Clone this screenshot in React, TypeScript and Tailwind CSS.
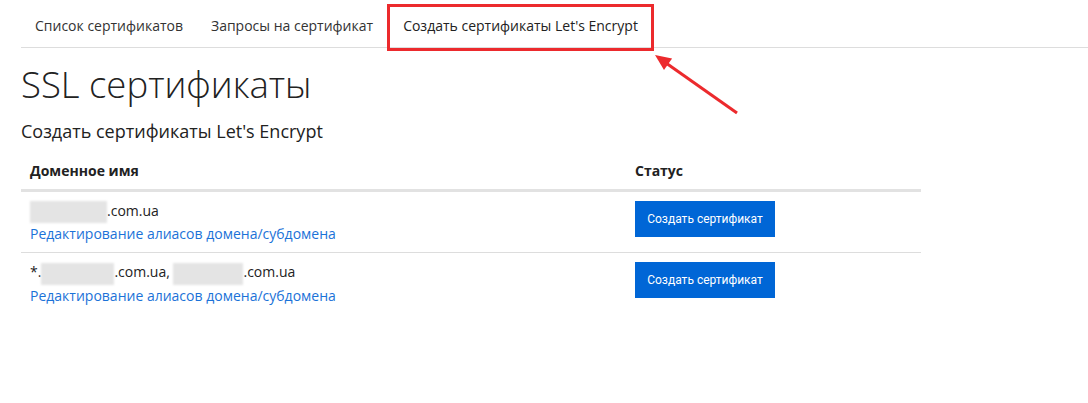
const rows = [
  { parts: ["blur:77", ".com.ua"], btn: "Создать сертификат" },
  { parts: ["*.", "blur:73", ".com.ua, ", "blur:70", ".com.ua"], btn: "Создать сертификат" },
];

const Blur = ({ w }: { w: number }) => (
  <span
    className="inline-block h-[22px] align-middle bg-[#e4e4e4] blur-[1px]"
    style={{ width: w }}
  />
);

const App = () => {
  return (
    <div className="relative min-h-screen bg-white pl-[21px] text-[#333] font-['Open_Sans',sans-serif]">
      {/* Tabs */}
      <ul className="flex border-b border-[#dddddd] text-[14px] leading-[20px]">
        <li className="px-[14px] pt-[16px] pb-[11px]">Список сертификатов</li>
        <li className="px-[14px] pt-[16px] pb-[11px]">Запросы на сертификат</li>
        <li className="relative px-[16px] pt-[16px] pb-[11px] text-[#222]">
          Создать сертификаты Let's Encrypt
          <span className="absolute left-0 right-0 top-[4px] -bottom-[4px] border-[3px] border-[#ec2a2d]" />
        </li>
      </ul>

      <h1 className="mt-[14px] text-[36.5px] leading-[44px] font-light text-[#222]">SSL сертификаты</h1>
      <h2 className="mt-[13px] text-[18px] leading-[24px] text-[#222]">Создать сертификаты Let's Encrypt</h2>

      {/* Table */}
      <table className="mt-[10px] w-[900px] border-collapse text-[14px]">
        <thead>
          <tr className="border-b-[3px] border-[#e2e2e2]">
            <th className="w-[605px] px-[9px] pt-[8px] pb-[8px] text-left font-bold leading-[20px] text-[#222]">
              Доменное имя
            </th>
            <th className="px-[9px] pt-[8px] pb-[8px] text-left font-bold leading-[20px] text-[#222]">Статус</th>
          </tr>
        </thead>
        <tbody>
          {rows.map((r, i) => (
            <tr key={i} className={i === 0 ? "border-b border-[#dddddd]" : ""}>
              <td className="align-top px-[9px] pt-[8px] pb-[7px]">
                <div className="leading-[22px] text-[#222]">
                  {r.parts.map((p, j) =>
                    p.startsWith("blur:") ? (
                      <Blur key={j} w={Number(p.slice(5))} />
                    ) : (
                      <span key={j}>{p}</span>
                    )
                  )}
                </div>
                <a href="#" className="block leading-[22px] text-[#1b72d8]">
                  Редактирование алиасов домена/субдомена
                </a>
              </td>
              <td className="align-top px-[9px] pt-[9px]">
                <button className="h-[36px] w-[140px] bg-[#0066d6] text-[12px] text-white font-['Roboto',sans-serif]">
                  {r.btn}
                </button>
              </td>
            </tr>
          ))}
        </tbody>
      </table>

      {/* Annotation arrow */}
      <svg className="pointer-events-none absolute left-0 top-0" width="1088" height="403">
        <line x1="737" y1="113" x2="666" y2="63" stroke="#ec2a2d" strokeWidth="3" />
        <polygon points="655,55 672.1,58.5 664,69.9" fill="#ec2a2d" />
      </svg>
    </div>
  );
};

export default App;
